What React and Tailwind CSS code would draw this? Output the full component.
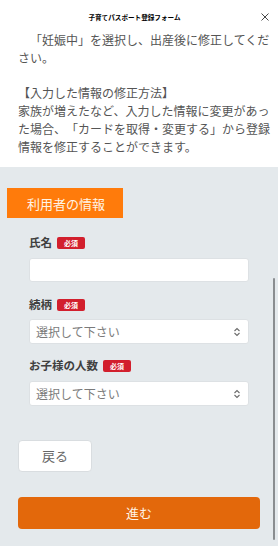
import React from 'react';

const FONT = { fontFamily: '"Noto Sans CJK JP", "Noto Sans", sans-serif' };

const Badge = () => (
    <span className="inline-flex h-[12px] w-[28px] items-center justify-center rounded-[2px] bg-[#d21f2d] text-[7px] font-bold leading-none text-white">
        必須
    </span>
);

const Label = ({ children }) => (
    <div className="flex h-[14px] items-center gap-[5px]">
        <span className="text-[11.5px] font-bold leading-none text-[#3f3f3f]">{children}</span>
        <Badge />
    </div>
);

const UpDown = () => (
    <svg width="8" height="10" viewBox="0 0 8 10" fill="none" stroke="#6b6b6b" strokeWidth="1.1">
        <path d="M1.5 4 L4 1.5 L6.5 4" />
        <path d="M1.5 6 L4 8.5 L6.5 6" />
    </svg>
);

const Select = () => (
    <div className="flex h-[25px] items-center justify-between rounded-[3px] border border-[#dde1e4] bg-white pl-[6px] pr-[7px]">
        <span className="text-[12px] leading-none text-[#7a7a7a]">選択して下さい</span>
        <UpDown />
    </div>
);

const App = () => {
    return (
        <div className="relative flex h-[546px] w-[278px] flex-col overflow-hidden bg-white" style={FONT}>
            {/* header */}
            <div className="flex h-[31px] items-start pt-[13px]">
                <div className="flex-1" />
                <div className="text-[6.6px] font-bold leading-[8px] text-black">子育てパスポート登録フォーム</div>
                <div className="flex flex-1 justify-end pr-[9px]">
                    <svg width="8" height="8" viewBox="0 0 8 8" stroke="#333" strokeWidth="0.9">
                        <path d="M0.5 0.5 L7.5 7.5 M7.5 0.5 L0.5 7.5" />
                    </svg>
                </div>
            </div>

            {/* notice text */}
            <div className="pb-[11px] pl-[18px] pr-[7.5px] text-[12px] leading-[18px] text-[#555] [text-spacing-trim:space-all]">
                <p>
                    {'\u3000「妊娠中」を選択し、出産後に修正してくだ'}
                    <br />
                    さい。
                </p>
                <div className="mt-[17px]">
                    <p>【入力した情報の修正方法】</p>
                    <p>家族が増えたなど、入力した情報に変更があった場合、「カードを取得・変更する」から登録情報を修正することができます。</p>
                </div>
            </div>

            {/* form area */}
            <div className="flex flex-1 flex-col bg-[#e4e9ec] pt-[21px]">
                <div className="ml-[7px] flex h-[30px] w-[116px] items-center bg-[#ff7b0b] pl-[20px] text-[13px] leading-none text-[#fff4e6]">
                    利用者の情報
                </div>

                <div className="flex flex-col px-[29px] pt-[18px]">
                    <Label>氏名</Label>
                    <div className="mt-[8px] h-[24px] rounded-[3px] border border-[#dde1e4] bg-white" />

                    <div className="mt-[16px]">
                        <Label>続柄</Label>
                    </div>
                    <div className="mt-[7px]">
                        <Select />
                    </div>

                    <div className="mt-[15px]">
                        <Label>お子様の人数</Label>
                    </div>
                    <div className="mt-[8px]">
                        <Select />
                    </div>
                </div>

                <div className="flex flex-col px-[18px] pt-[34px]">
                    <button className="flex h-[32px] w-[74px] items-center justify-center rounded-[4px] border border-[#d9dde0] bg-white text-[13px] text-[#666]">
                        戻る
                    </button>
                    <button className="mt-[25px] flex h-[32px] w-full items-center justify-center rounded-[4px] bg-[#e3680b] text-[13px] text-[#fff4e6]">
                        進む
                    </button>
                </div>
            </div>

            {/* scroll indicator */}
            <div className="absolute right-[3px] top-[278px] h-[262px] w-[2px] rounded-full bg-[#8a8d90]" />
        </div>
    );
};

export default App;
